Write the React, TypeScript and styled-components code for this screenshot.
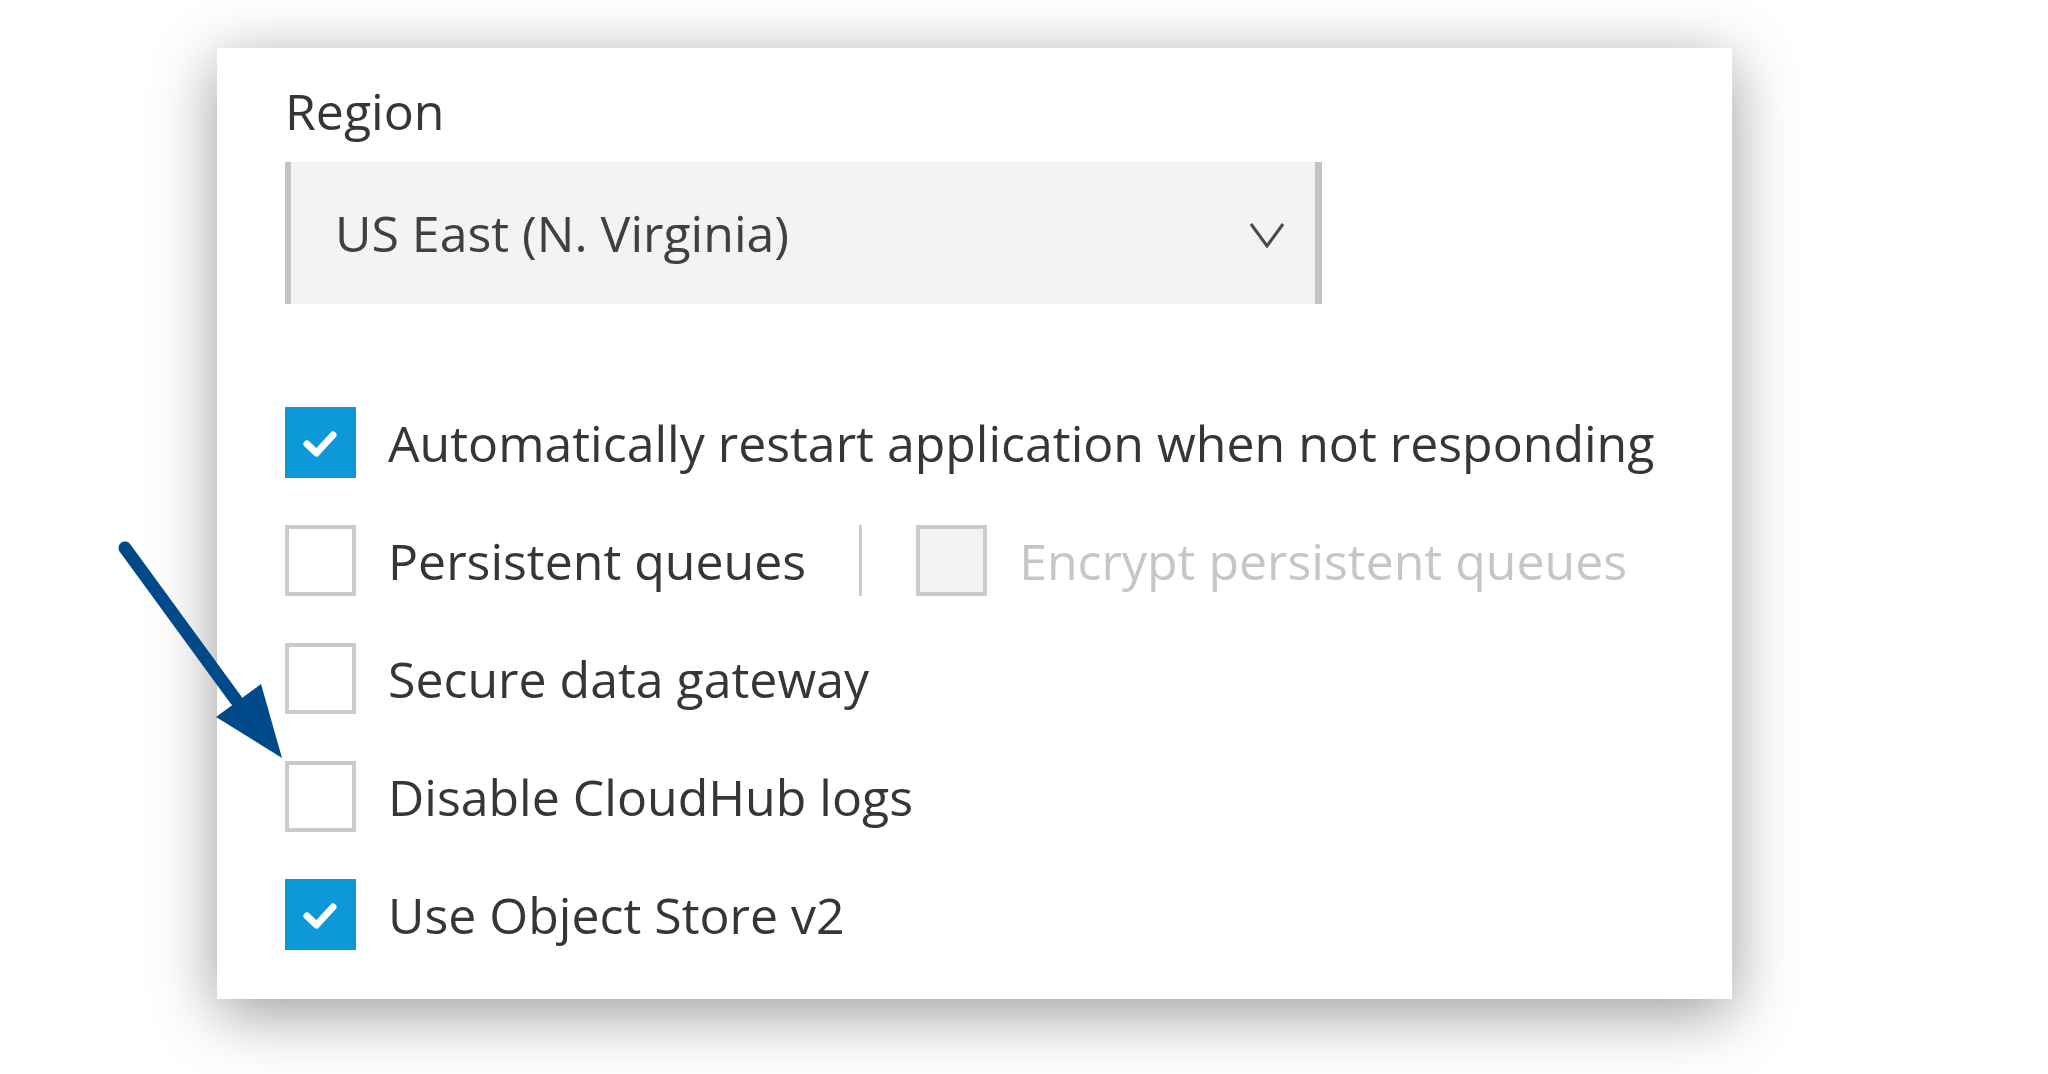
import React from "react";
import styled, { createGlobalStyle } from "styled-components";

const GlobalStyle = createGlobalStyle`
  html, body {
    margin: 0;
    padding: 0;
    background: #ffffff;
  }
  body {
    font-family: "Open Sans", "Liberation Sans", Arial, sans-serif;
  }
`;

const Page = styled.div`
  position: relative;
  width: 2048px;
  height: 1074px;
  overflow: hidden;
  background: #ffffff;
  padding: 48px 0 0 217px;
  box-sizing: border-box;
`;

const Card = styled.div`
  width: 1515px;
  box-sizing: border-box;
  background: #ffffff;
  padding: 30px 0 49px 68px;
  box-shadow: 0 14px 60px rgba(0, 0, 0, 0.4);
  display: flex;
  flex-direction: column;
`;

const FieldLabel = styled.div`
  font-size: 50px;
  line-height: 67px;
  color: #363636;
  margin-bottom: 17px;
`;

const Select = styled.div`
  width: 1037px;
  height: 142px;
  box-sizing: border-box;
  background: #f2f3f5;
  border-left: 6px solid #c3c3c3;
  border-right: 7px solid #c3c3c3;
  padding: 0 30px 0 44px;
  display: flex;
  align-items: center;
  justify-content: space-between;
`;

const SelectValue = styled.span`
  font-size: 50px;
  color: #404040;
  line-height: 1.36;
`;

const ChevronWrap = styled.span`
  display: flex;
  margin-top: 5px;
`;

const Options = styled.div`
  margin-top: 103px;
  display: flex;
  flex-direction: column;
  gap: 47px;
`;

const Row = styled.div`
  display: flex;
  align-items: center;
  height: 71px;
`;

const Box = styled.span<{ $checked?: boolean; $disabled?: boolean }>`
  flex: none;
  width: 71px;
  height: 71px;
  box-sizing: border-box;
  display: flex;
  align-items: center;
  justify-content: center;
  background: ${(p) => (p.$checked ? "#0d98da" : p.$disabled ? "#f1f2f4" : "#ffffff")};
  border: ${(p) => (p.$checked ? "none" : "4px solid #cbcbcb")};
`;

const Label = styled.span<{ $disabled?: boolean }>`
  margin-left: 32px;
  font-size: 50px;
  line-height: 1.36;
  color: ${(p) => (p.$disabled ? "#c6c6c6" : "#363636")};
  white-space: nowrap;
`;

const Divider = styled.span`
  flex: none;
  width: 3px;
  height: 71px;
  background: #cbcbcb;
  margin: 0 54px 0 53px;
`;

const ArrowLayer = styled.svg`
  position: absolute;
  left: 0;
  top: 0;
  pointer-events: none;
`;

const Chevron = () => (
  <svg width="36" height="27" viewBox="0 0 36 27" fill="none">
    <polyline
      points="2,2 18,24 34,2"
      stroke="#4a4a4a"
      strokeWidth="3"
      strokeLinejoin="miter"
      fill="none"
    />
  </svg>
);

const Check = () => (
  <svg width="71" height="71" viewBox="0 0 71 71" fill="none">
    <path
      d="M22 37 L31.5 46 L48 28"
      stroke="#ffffff"
      strokeWidth="7"
      strokeLinecap="round"
      strokeLinejoin="round"
      fill="none"
    />
  </svg>
);

type CheckboxProps = {
  label: string;
  checked?: boolean;
  disabled?: boolean;
};

const Checkbox: React.FC<CheckboxProps> = ({ label, checked, disabled }) => (
  <>
    <Box $checked={checked} $disabled={disabled}>
      {checked && <Check />}
    </Box>
    <Label $disabled={disabled}>{label}</Label>
  </>
);

export default function App() {
  return (
    <>
      <GlobalStyle />
      <Page>
        <Card>
          <FieldLabel>Region</FieldLabel>
          <Select>
            <SelectValue>US East (N. Virginia)</SelectValue>
            <ChevronWrap>
              <Chevron />
            </ChevronWrap>
          </Select>
          <Options>
            <Row>
              <Checkbox checked label="Automatically restart application when not responding" />
            </Row>
            <Row>
              <Checkbox label="Persistent queues" />
              <Divider />
              <Checkbox disabled label="Encrypt persistent queues" />
            </Row>
            <Row>
              <Checkbox label="Secure data gateway" />
            </Row>
            <Row>
              <Checkbox label="Disable CloudHub logs" />
            </Row>
            <Row>
              <Checkbox checked label="Use Object Store v2" />
            </Row>
          </Options>
        </Card>
        <ArrowLayer width="320" height="800" viewBox="0 0 320 800">
          <line
            x1="125"
            y1="548"
            x2="236"
            y2="700"
            stroke="#02498a"
            strokeWidth="13"
            strokeLinecap="round"
          />
          <polygon points="216,717 261,684 282,758" fill="#02498a" />
        </ArrowLayer>
      </Page>
    </>
  );
}
